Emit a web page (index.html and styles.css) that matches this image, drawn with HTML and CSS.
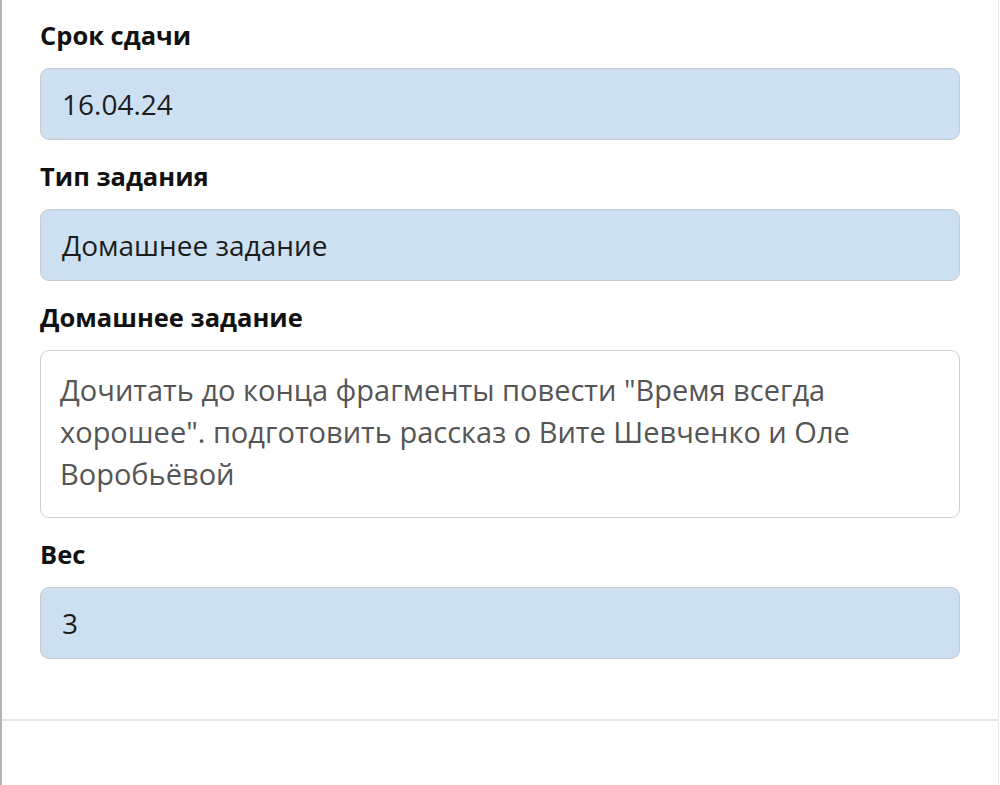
FILE: index.html
```html
<!DOCTYPE html>
<html lang="ru">
<head>
  <meta charset="UTF-8" />
  <meta name="viewport" content="width=device-width, initial-scale=1.0"/>
  <title>Задание</title>
  <link rel="stylesheet" href="styles.css">
</head>
<body>
  <div class="panel">
    <div class="form">
      <div class="label">Срок сдачи</div>
      <div class="field">16.04.24</div>

      <div class="label">Тип задания</div>
      <div class="field">Домашнее задание</div>

      <div class="label">Домашнее задание</div>
      <div class="field field-text">Дочитать до конца фрагменты повести "Время всегда хорошее". подготовить рассказ о Вите Шевченко и Оле Воробьёвой</div>

      <div class="label">Вес</div>
      <div class="field">3</div>
    </div>

    <div class="divider"></div>
  </div>
</body>
</html>
```

FILE: styles.css
```css
body {
  margin: 0;
  background: #ffffff;
  font-family: 'Open Sans', 'Noto Sans', sans-serif;
  color: #1a1a1a;
}

.panel {
  height: 785px;
  box-sizing: border-box;
  border-left: 2px solid #b4b4b4;
  border-right: 1px solid #ececec;
  margin-right: 1px;
}

.form {
  padding: 18px 38px 0 38px;
}

.label {
  font-size: 25.5px;
  font-weight: bold;
  line-height: 35px;
  margin-bottom: 15px;
  color: #111;
}

.field {
  height: 72px;
  box-sizing: border-box;
  display: flex;
  align-items: center;
  padding: 0 21px;
  background: #cde0f2;
  border: 1px solid #c6cbd1;
  border-radius: 9px;
  font-size: 28px;
  color: #1c1c1c;
  margin-bottom: 19px;
}

.field-text {
  height: 168px;
  display: block;
  padding: 18px 20px 0 19px;
  background: #ffffff;
  border-color: #cfcfcf;
  color: #555555;
  font-size: 29px;
  line-height: 42px;
}

.divider {
  margin-top: 60px;
  height: 2px;
  background: #e6e6e6;
}
```
